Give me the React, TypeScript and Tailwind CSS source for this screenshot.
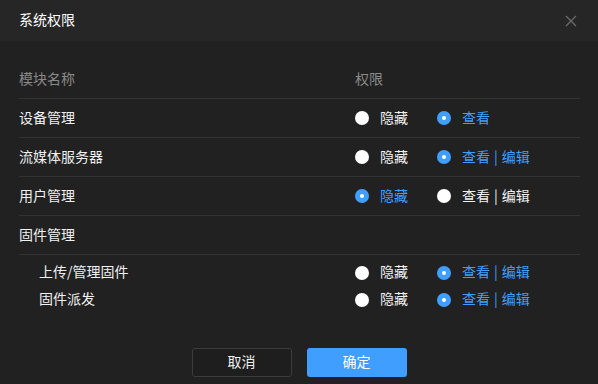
import React from "react";

type Opt = { label: React.ReactNode; checked: boolean };

function Radio({ checked, label }: Opt) {
  return (
    <div className="flex items-center w-[82px]">
      {checked ? (
        <span className="w-[14px] h-[14px] rounded-full bg-[#409eff] flex items-center justify-center shrink-0 mt-[2px]">
          <span className="w-[4px] h-[4px] rounded-full bg-white" />
        </span>
      ) : (
        <span className="w-[14px] h-[14px] rounded-full bg-white shrink-0 mt-[2px]" />
      )}
      <span className={`ml-[11px] whitespace-nowrap ${checked ? "text-[#409eff]" : "text-[#f0f0f0]"}`}>{label}</span>
    </div>
  );
}

const VE = (
  <>
    查看<span className="mx-[4px]">|</span>编辑
  </>
);

function Perms({ hide }: { hide: boolean }) {
  return (
    <div className="flex items-center">
      <Radio checked={hide} label="隐藏" />
      <Radio checked={!hide} label={VE} />
    </div>
  );
}

export default function App() {
  const font = { fontFamily: '"Noto Sans CJK SC", "Noto Sans", sans-serif' };
  return (
    <div className="w-[598px] h-[384px] bg-[#212121] flex flex-col text-[14px] text-[#f0f0f0]" style={font}>
      <div className="h-[41px] bg-[#262626] flex items-center justify-between pl-[19px] pr-[21px] pb-[2px] shrink-0">
        <span className="text-[14px] text-white">系统权限</span>
        <svg width="12" height="12" viewBox="0 0 12 12" className="text-[#6b6b6b] mt-[2px]">
          <path d="M1 1L11 11M11 1L1 11" stroke="currentColor" strokeWidth="1.3" />
        </svg>
      </div>
      <div className="pl-[19px] pr-[18px] pt-[19px] flex flex-col">
        <div className="h-[39px] flex items-center border-b border-[#333333] text-[#8a8a8a] pb-[2px]">
          <div className="w-[336px]">模块名称</div>
          <div>权限</div>
        </div>
        <div className="h-[39px] flex items-center border-b border-[#333333] pb-[2px]">
          <div className="w-[336px]">设备管理</div>
          <div className="flex items-center">
            <Radio checked={false} label="隐藏" />
            <Radio checked={true} label="查看" />
          </div>
        </div>
        <div className="h-[39px] flex items-center border-b border-[#333333] pb-[2px]">
          <div className="w-[336px]">流媒体服务器</div>
          <Perms hide={false} />
        </div>
        <div className="h-[39px] flex items-center border-b border-[#333333] pb-[2px]">
          <div className="w-[336px]">用户管理</div>
          <Perms hide={true} />
        </div>
        <div className="h-[39px] flex items-center border-b border-[#333333] pb-[2px]">
          <div className="w-[336px]">固件管理</div>
        </div>
        <div className="pt-[4px] flex flex-col">
          <div className="h-[27px] flex items-center pb-[2px]">
            <div className="w-[336px] pl-[20px]">上传/管理固件</div>
            <Perms hide={false} />
          </div>
          <div className="h-[27px] flex items-center pb-[2px]">
            <div className="w-[336px] pl-[20px]">固件派发</div>
            <Perms hide={false} />
          </div>
        </div>
      </div>
      <div className="mt-[35px] flex justify-center gap-[15px]">
        <button className="w-[100px] h-[29px] rounded-[3px] border border-[#3c3c3c] bg-[#1e1e1e] text-[#f0f0f0] text-[14px] pb-[2px]">取消</button>
        <button className="w-[100px] h-[29px] rounded-[3px] bg-[#409eff] text-white text-[14px] pb-[2px]">确定</button>
      </div>
    </div>
  );
}
